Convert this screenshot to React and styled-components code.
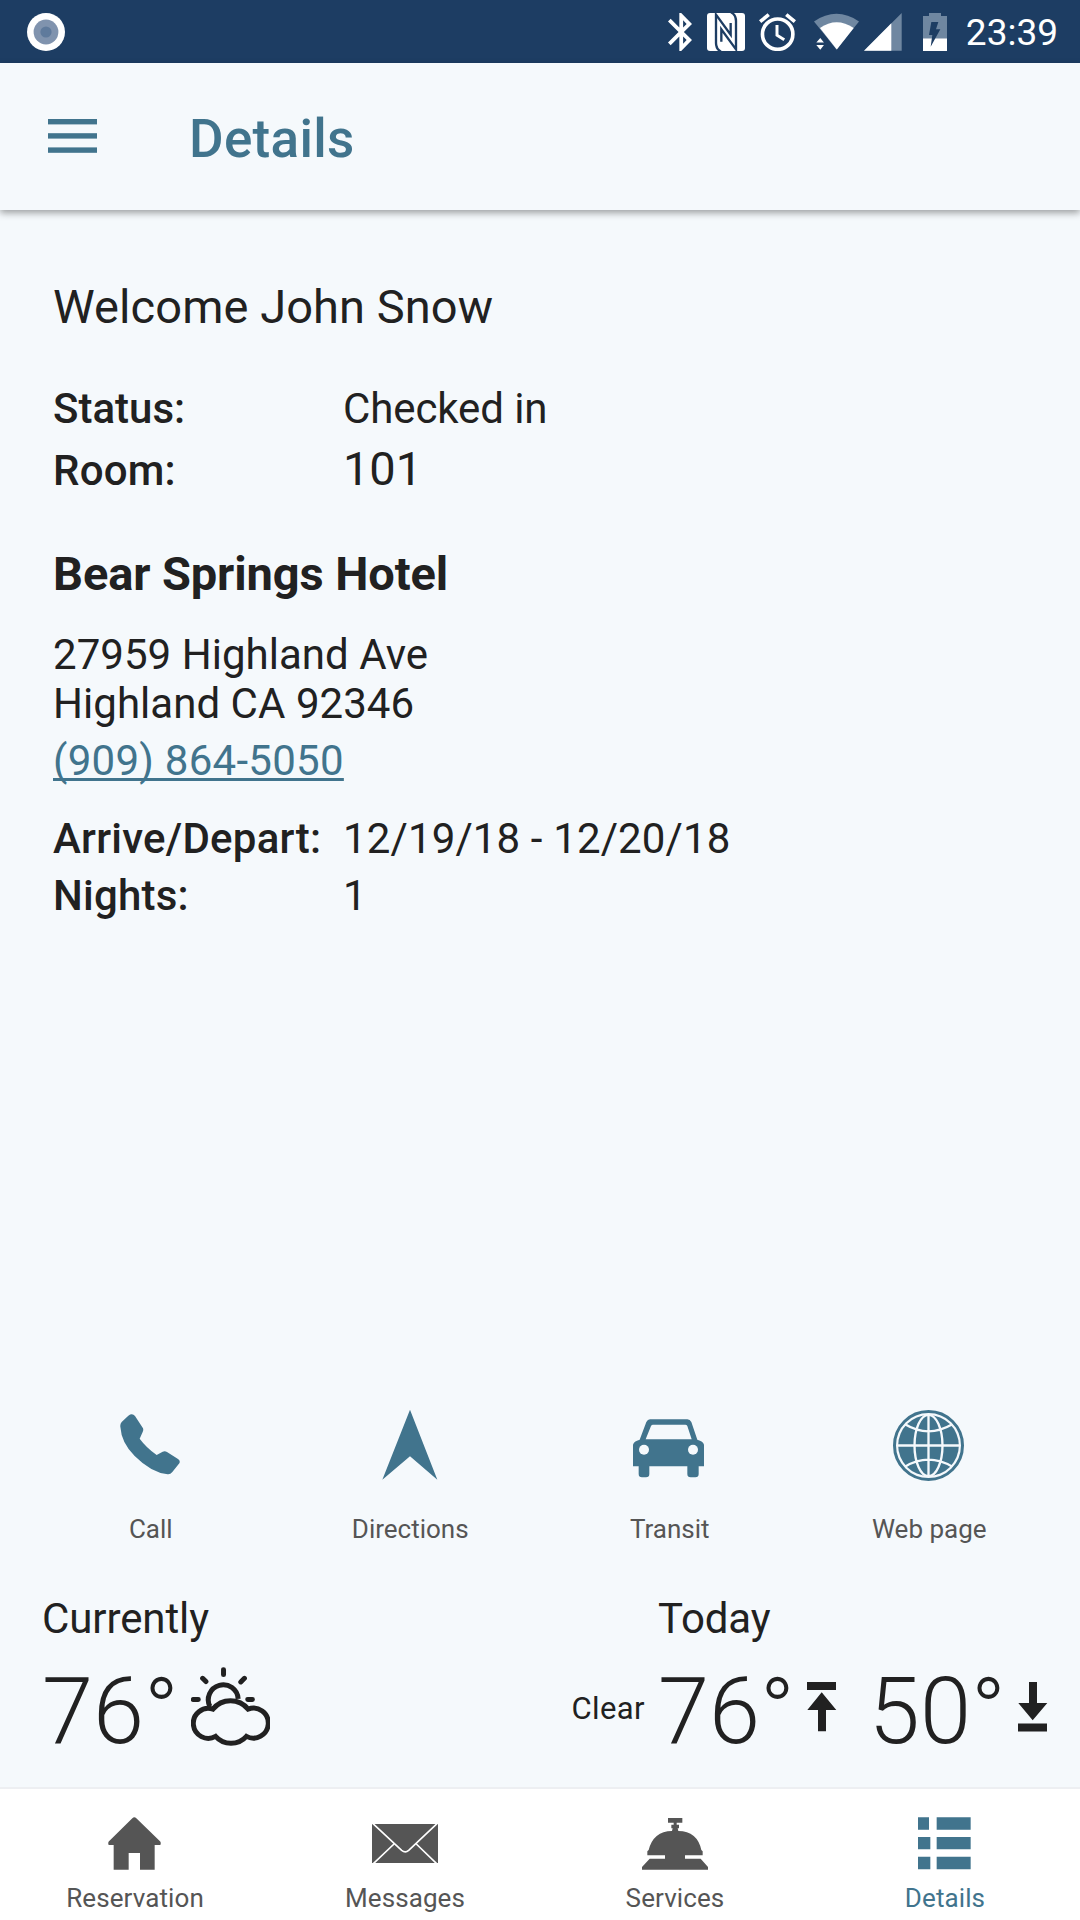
import styled, { createGlobalStyle } from "styled-components";
import { useState } from "react";

const TEAL = "#41748d";
const GREY = "#555555";

const actions = [
  { name: "Call", Icon: PhoneIcon },
  { name: "Directions", Icon: ArrowIcon },
  { name: "Transit", Icon: CarIcon },
  { name: "Web page", Icon: GlobeIcon },
];

const tabs = [
  { name: "Reservation", Icon: HomeIcon },
  { name: "Messages", Icon: MailIcon },
  { name: "Services", Icon: BellIcon },
  { name: "Details", Icon: ListIcon },
];

export default function App() {
  const [tab, setTab] = useState("Details");

  return (
    <Screen>
      <GlobalStyle />
      <StatusBar>
        <RecordIcon />
        <StatusIcons>
          <BluetoothIcon />
          <NfcIcon />
          <AlarmIcon />
          <WifiIcon />
          <SignalIcon />
          <BatteryIcon />
          <Clock>23:39</Clock>
        </StatusIcons>
      </StatusBar>

      <Header>
        <MenuIcon />
        <Title>{tab}</Title>
      </Header>

      <Content>
        <Welcome>Welcome John Snow</Welcome>
        <Row top={49}>
          <Label>Status:</Label>
          <Value>Checked in</Value>
        </Row>
        <Row top={7}>
          <Label spacing={0.2}>Room:</Label>
          <Value big>101</Value>
        </Row>
        <Hotel>Bear Springs Hotel</Hotel>
        <Address>
          27959 Highland Ave
          <br />
          Highland CA 92346
        </Address>
        <Phone href="tel:9098645050">(909) 864-5050</Phone>
        <Row top={29}>
          <Label spacing={0.25}>Arrive/Depart:</Label>
          <Value spacing={0.13}>12/19/18 - 12/20/18</Value>
        </Row>
        <Row top={8}>
          <Label spacing={0.2}>Nights:</Label>
          <Value>1</Value>
        </Row>
      </Content>

      <Actions>
        {actions.map(({ name, Icon }) => (
          <Action key={name}>
            <ActionIcon>
              <Icon />
            </ActionIcon>
            {name}
          </Action>
        ))}
      </Actions>

      <Weather>
        <Current>
          <WeatherLabel>Currently</WeatherLabel>
          <Temps>
            <Temp>76°</Temp>
            <CloudSunIcon />
          </Temps>
        </Current>
        <Summary>Clear</Summary>
        <Today>
          <WeatherLabel>Today</WeatherLabel>
          <Temps>
            <Temp>76°</Temp>
            <HighIcon />
            <Temp>50°</Temp>
            <LowIcon />
          </Temps>
        </Today>
      </Weather>

      <TabBar>
        {tabs.map(({ name, Icon }) => (
          <Tab key={name} active={name === tab} onClick={() => setTab(name)}>
            <TabIcon>
              <Icon />
            </TabIcon>
            {name}
          </Tab>
        ))}
      </TabBar>
    </Screen>
  );
}

function RecordIcon() {
  return (
    <svg width="38" height="38" viewBox="0 0 38 38">
      <circle cx="19" cy="19" r="19" fill="#ffffff" />
      <circle cx="19" cy="19" r="12.4" fill="#8093ae" />
      <circle cx="19" cy="19" r="5.6" fill="#5f7a9c" />
    </svg>
  );
}

function BluetoothIcon() {
  return (
    <svg width="24" height="38" viewBox="5 2 12.71 20">
      <path
        fill="#ffffff"
        d="M17.71 7.71L12 2h-1v7.59L6.41 5 5 6.41 10.59 12 5 17.59 6.41 19 11 14.41V22h1l5.71-5.71-4.3-4.29 4.3-4.29zM13 5.83l1.88 1.88L13 9.59V5.83zm1.88 10.46L13 18.17v-3.76l1.88 1.88z"
      />
    </svg>
  );
}

function NfcIcon() {
  return (
    <NfcSvg width="38" height="38" viewBox="0 0 114 114">
      <rect width="114" height="114" rx="9" fill="#ffffff" />
      <path
        fill="none"
        stroke="#1d3d63"
        strokeWidth="7"
        d="M42 116 Q27 108 27 90 V5 L71 65 V30 M72 -2 Q87 6 87 24 V109 L43 49 V86"
      />
    </NfcSvg>
  );
}

function AlarmIcon() {
  return (
    <AlarmSvg width="37" height="38" viewBox="357 37 111 115">
      <g fill="none" stroke="#ffffff">
        <circle cx="413" cy="101" r="46" strokeWidth="11" />
        <path strokeWidth="9" d="M411 73 V104 L433 118" />
        <path strokeWidth="11" d="M360 63 L386 42 M439 42 L465 63" />
      </g>
    </AlarmSvg>
  );
}

function WifiIcon() {
  return (
    <WifiSvg width="45" height="37" viewBox="521 40 136 111">
      <path fill="#6f87a1" d="M521 65 Q589 19 657 65 L589 150 Z" />
      <path fill="#ffffff" d="M539 85 Q589 50 641 85 L590 150 Z" />
      <path fill="#1d3d63" d="M521 106 H552 L563 120 V151 H521 Z" />
      <path fill="#ffffff" d="M528 129 L540 115 L551 129 Z M528 136 H551 L540 151 Z" />
    </WifiSvg>
  );
}

function SignalIcon() {
  return (
    <SignalSvg width="38" height="38" viewBox="672 38 114 114">
      <path fill="#6f87a1" d="M785 38 V151 H672 Z" />
      <path fill="#ffffff" d="M754 69 V151 H672 Z" />
    </SignalSvg>
  );
}

function BatteryIcon() {
  return (
    <BatterySvg width="24" height="38" viewBox="849 36 72 114">
      <path fill="#6f87a1" d="M849 45 H867 V36 H903 V45 H921 V112 H849 Z" />
      <path fill="#ffffff" d="M849 112 H921 V150 H849 Z" />
      <path fill="#1d3d63" d="M874 63 H895 L888 85 H901 L872 137 L877 102 H867 Z" />
    </BatterySvg>
  );
}

function MenuIcon() {
  return (
    <MenuSvg width="49" height="34" viewBox="0 0 49 34" fill={TEAL}>
      <rect width="49" height="5.4" />
      <rect y="14.2" width="49" height="5.4" />
      <rect y="28.4" width="49" height="5.4" />
    </MenuSvg>
  );
}

function PhoneIcon() {
  return (
    <svg width="60" height="61" viewBox="121 74 180 183">
      <path
        fill={TEAL}
        d="M146 79 Q158 70 166 80 L190 117 Q192 122 189 128 L180 148 Q200 175 231 197 L249 187 Q256 184 262 188 L295 209 Q303 214 299 222 L278 248 Q272 256 264 255 Q215 250 165 200 Q125 160 122 112 Q121 104 126 98 Z"
      />
    </svg>
  );
}

function ArrowIcon() {
  return (
    <svg width="56" height="71" viewBox="905 58 168 213">
      <path fill={TEAL} d="M989 60 L1071 270 L989 200 L906 270 Z" />
    </svg>
  );
}

function CarIcon() {
  return (
    <CarSvg width="71" height="59" viewBox="99 86 213 177">
      <path
        fill={TEAL}
        fillRule="evenodd"
        d="M150 87 H262 Q270 87 274 95 L292 148 Q310 153 312 163 V228 H296 V251 Q296 261 286 261 H272 Q262 261 262 251 V228 H148 V251 Q148 261 138 261 H126 Q116 261 116 251 V228 H99 V163 Q101 153 119 148 L139 95 Q143 87 150 87 Z M159 103 Q155 103 153 107 L137 147 H275 L262 107 Q260 103 256 103 Z"
      />
      <circle cx="132" cy="178" r="15" fill="#f5f9fc" />
      <circle cx="279" cy="178" r="15" fill="#f5f9fc" />
    </CarSvg>
  );
}

function GlobeIcon() {
  return (
    <GlobeSvg width="71" height="71" viewBox="879 59 213 213">
      <circle cx="985.5" cy="165.5" r="102" fill="none" stroke={TEAL} strokeWidth="9" />
      <circle cx="985.5" cy="165.5" r="91" fill={TEAL} />
      <g fill="none" stroke="#f5f9fc" strokeWidth="7">
        <path d="M985.5 74 V257 M894 165.5 H1077 M915 102 Q985 144 1057 102 M915 229 Q985 187 1057 229" />
        <ellipse cx="985.5" cy="165.5" rx="42" ry="92" />
      </g>
    </GlobeSvg>
  );
}

function CloudSunIcon() {
  return (
    <CloudSvg width="79" height="79" viewBox="516 230 238 238">
      <g fill="none" stroke="#212121" strokeWidth="15">
        <path d="M582 357 A45 45 0 1 0 590 439 A62 62 0 0 0 683 439 A45 45 0 1 0 688 357 A68 68 0 0 0 582 357 Z" />
        <path d="M573 349 A45 45 0 1 1 658 326" />
        <path
          strokeLinecap="round"
          d="M614 238 V253 M551 264 L561 274 M677 264 L666 275 M523 328 H538 M687 328 H701"
        />
      </g>
    </CloudSvg>
  );
}

function HighIcon() {
  return (
    <HighSvg width="30" height="50" viewBox="0 0 30 50">
      <path fill="#212121" d="M0 0 H29 V8 H0 Z M14.7 10.3 L29.3 28 H19 V49.3 H11 V28 H0.3 Z" />
    </HighSvg>
  );
}

function LowIcon() {
  return (
    <LowSvg width="30" height="50" viewBox="0 0 30 50">
      <path fill="#212121" d="M0 41.5 H29 V49.5 H0 Z M14.7 38.3 L0.3 21 H11 V0 H19 V21 H29.3 Z" />
    </LowSvg>
  );
}

function HomeIcon() {
  return (
    <svg width="53" height="53" viewBox="205 111 159 159">
      <path
        fill={GREY}
        d="M284 112 Q287 112 290 115 L361 184 Q365 188 362 195 H345 V269 H301 V219 H267 V269 H222 V195 H207 Q204 188 208 184 L278 115 Q281 112 284 112 Z"
      />
    </svg>
  );
}

function MailIcon() {
  return (
    <svg width="66" height="39" viewBox="996 132 198 117">
      <rect x="996" y="132" width="198" height="117" fill={GREY} />
      <path
        fill="none"
        stroke="#ffffff"
        strokeWidth="5"
        d="M998 130 L1085 211 Q1096 220 1106 211 L1192 130 M1062 192 L1000 251 M1129 192 L1190 251"
      />
    </svg>
  );
}

function BellIcon() {
  return (
    <svg width="66" height="52" viewBox="246 112 198 156">
      <path
        fill={GREY}
        d="M324 112 H367 V126 H350 V132 H357 V143 H353 L355 151 Q412 152 424 208 L428 212 V224 H375 V234 H422 L444 259 V267 H246 V259 L269 234 H315 V224 H262 V212 L266 208 Q280 152 336 151 L338 143 H334 V132 H341 V126 H324 Z"
      />
    </svg>
  );
}

function ListIcon() {
  return (
    <svg width="53" height="53" viewBox="1075 112 159 159" fill={TEAL}>
      <path d="M1075 113 h33 v37 h-33 Z M1075 172 h37 v37 h-37 Z M1075 231 h37 v38 h-37 Z" />
      <path d="M1131 113 h102 v37 h-102 Z M1131 172 h102 v37 h-102 Z M1131 231 h102 v38 h-102 Z" />
    </svg>
  );
}

const GlobalStyle = createGlobalStyle`
  * {
    box-sizing: border-box;
  }
  body {
    margin: 0;
    background: #f5f9fc;
    font-family: Roboto, sans-serif;
    color: #212121;
  }
  svg {
    display: block;
    flex-shrink: 0;
  }
`;

const Screen = styled.div`
  width: 1080px;
  height: 1920px;
  display: flex;
  flex-direction: column;
  overflow: hidden;
`;

const StatusBar = styled.div`
  height: 63px;
  padding: 0 22px 0 27px;
  display: flex;
  align-items: center;
  justify-content: space-between;
  background: #1d3d63;
`;

const StatusIcons = styled.div`
  display: flex;
  align-items: center;
`;

const NfcSvg = styled.svg`
  margin-left: 15px;
`;
const AlarmSvg = styled.svg`
  margin-left: 14px;
`;
const WifiSvg = styled.svg`
  margin-left: 18px;
`;
const SignalSvg = styled.svg`
  margin-left: 5px;
`;
const BatterySvg = styled.svg`
  margin-left: 21px;
`;

const Clock = styled.span`
  margin-left: 19px;
  padding-top: 2px;
  font-size: 37px;
  line-height: 43px;
  color: #ffffff;
`;

const Header = styled.header`
  height: 147px;
  padding: 0 48px;
  display: flex;
  align-items: center;
  gap: 92px;
  box-shadow: 0 3px 7px rgba(0, 0, 0, 0.36);
`;

const MenuSvg = styled.svg`
  margin-bottom: 2px;
`;

const Title = styled.h1`
  margin: 6px 0 0;
  font-size: 53px;
  font-weight: 500;
  line-height: 61px;
  letter-spacing: 0.3px;
  color: ${TEAL};
`;

const Content = styled.main`
  flex: 1;
  padding: 68px 53px 0;
  font-size: 42px;
  line-height: 49px;
`;

const Welcome = styled.p`
  margin: 0;
  font-size: 47px;
  line-height: 57px;
  letter-spacing: 0.08px;
`;

const Row = styled.div`
  margin-top: ${(props) => props.top}px;
  display: grid;
  grid-template-columns: 290px 1fr;
  align-items: baseline;
`;

const Label = styled.span`
  font-weight: 500;
  letter-spacing: ${(props) => props.spacing || 0}px;
`;

const Value = styled.span`
  font-size: ${(props) => (props.big ? "47px" : "42px")};
  line-height: ${(props) => (props.big ? "57px" : "49px")};
  letter-spacing: ${(props) => props.spacing || -0.1}px;
`;

const Hotel = styled.h2`
  margin: 48px 0 0;
  font-size: 47px;
  font-weight: 700;
  line-height: 57px;
  letter-spacing: -0.1px;
`;

const Address = styled.p`
  margin: 28px 0 8px;
  letter-spacing: 0.04px;
`;

const Phone = styled.a`
  display: block;
  width: max-content;
  color: ${TEAL};
  letter-spacing: 0.27px;
  text-decoration: underline;
  text-decoration-skip-ink: none;
  text-decoration-thickness: 3px;
  text-underline-offset: 3px;
`;

const Actions = styled.div`
  padding: 0 21px;
  display: grid;
  grid-template-columns: repeat(4, 1fr);
  margin-bottom: 50px;
`;

const Action = styled.div`
  display: flex;
  flex-direction: column;
  align-items: center;
  font-size: 26px;
  line-height: 30px;
  color: ${GREY};
`;

const ActionIcon = styled.div`
  height: 71px;
  margin-bottom: 34px;
  padding-right: 1px;
  display: flex;
  align-items: center;
`;

const CarSvg = styled.svg`
  margin: 8px 1px 0 0;
`;

const GlobeSvg = styled.svg`
  margin: 1px 1px 0 0;
`;

const Weather = styled.section`
  padding: 0 33px 0 42px;
  display: flex;
  margin-bottom: 22px;
`;

const Current = styled.div`
  flex: 1;
`;

const Today = styled.div`
  width: 389px;
`;

const WeatherLabel = styled.div`
  margin-bottom: 15px;
  font-size: 42px;
  line-height: 49px;
  letter-spacing: -0.1px;
`;

const Summary = styled.div`
  margin: 97px 13px 0 0;
  font-size: 31px;
  line-height: 36px;
  letter-spacing: 0.4px;
`;

const Temps = styled.div`
  display: flex;
`;

const Temp = styled.span`
  font-size: 92px;
  font-weight: 300;
  line-height: 107px;
`;

const CloudSvg = styled.svg`
  margin: 9px 0 0 12px;
`;

const HighSvg = styled.svg`
  margin: 24px 32px 0 12px;
`;

const LowSvg = styled.svg`
  margin: 24px 0 0 12px;
`;

const TabBar = styled.nav`
  height: 133px;
  display: grid;
  grid-template-columns: repeat(4, 1fr);
  border-top: 2px solid #edeff2;
  background: #ffffff;
`;

const Tab = styled.button.withConfig({
  shouldForwardProp: (prop) => prop !== "active",
})`
  padding: 28px 0 0;
  display: flex;
  flex-direction: column;
  align-items: center;
  border: none;
  background: none;
  font-family: inherit;
  font-size: 26px;
  line-height: 30px;
  letter-spacing: 0.1px;
  color: ${(props) => (props.active ? TEAL : GREY)};
`;

const TabIcon = styled.div`
  height: 53px;
  margin-bottom: 13px;
  padding-right: 1px;
  display: flex;
  align-items: center;
`;
